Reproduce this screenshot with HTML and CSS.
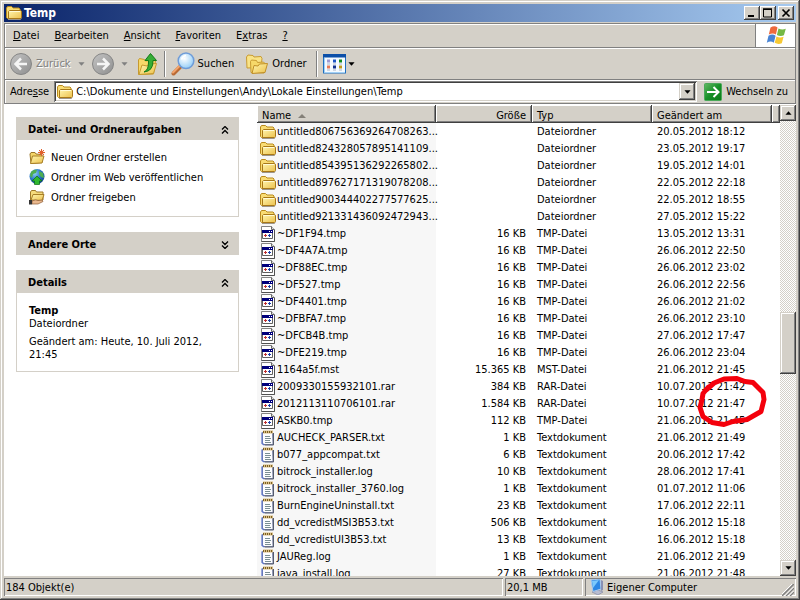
FILE: index.html
```html
<!DOCTYPE html>
<html lang="de">
  <head>
    <meta charset="UTF-8" />
    <meta name="viewport" content="width=device-width, initial-scale=1.0" />
    <title>Temp</title>
    <link rel="stylesheet" href="styles.css">
  </head>
  <body>
    <!-- Shared icons -->
    <svg class="sprite" aria-hidden="true">
      <defs>
        <linearGradient id="gold" x1="0" y1="0" x2="1" y2="1">
          <stop offset="0" stop-color="#fff6ae" />
          <stop offset="1" stop-color="#ecc04c" />
        </linearGradient>
        <linearGradient id="grey" x1="0" y1="0" x2="1" y2="1">
          <stop offset="0" stop-color="#c4c4c4" />
          <stop offset="1" stop-color="#8e8e8e" />
        </linearGradient>
        <linearGradient id="green" x1="0" y1="0" x2="1" y2="1">
          <stop offset="0" stop-color="#63b963" />
          <stop offset="0.5" stop-color="#189028" />
          <stop offset="1" stop-color="#0b7a18" />
        </linearGradient>
        <radialGradient id="lens" cx="0.4" cy="0.35" r="0.7">
          <stop offset="0" stop-color="#ffffff" />
          <stop offset="1" stop-color="#8ecbf7" />
        </radialGradient>
        <radialGradient id="earth" cx="0.35" cy="0.3" r="0.8">
          <stop offset="0" stop-color="#8fd0f5" />
          <stop offset="0.5" stop-color="#2a78c8" />
          <stop offset="1" stop-color="#0e3f86" />
        </radialGradient>
      </defs>
      <symbol id="folder" viewBox="0 0 16 16">
        <path d="M2 14.500h12.500l1-1" fill="none" stroke="#9c958a" />
        <path d="M.5 12.500v-9.500l1-1.500h4l1.500 1.500h6l1 1v8.500l-1 1h-11.500z" fill="#f9dc74" stroke="#b98a1c" />
        <path d="M2.500 13.500v-7l1-1h11l1 .8v6.200l-1 1z" fill="url(#gold)" stroke="#a87818" />
        <path d="M3.500 6.500h10.500" stroke="#fffbd8" />
      </symbol>
      <symbol id="sysfile" viewBox="0 0 16 16">
        <path d="M1.500.5h10l3 3v12h-13z" fill="#fff" stroke="#848484" />
        <path d="M14.500 4v11.500h-13" fill="none" stroke="#505050" />
        <path d="M11.500.5v3h3" fill="#ddd" stroke="#666" />
        <path d="M2.500 4.500h10v8h-10z" fill="#fff" stroke="#606060" />
        <path d="M2 4h11v3h-11z" fill="#00007c" />
        <path d="M9 5.500h1M11 5.500h1" stroke="#fff" />
        <path d="M4 9.500h3M5.500 8v3" stroke="#c03030" />
        <path d="M8 9.500h3M9.500 8v3" stroke="#1a3fa8" />
      </symbol>
      <symbol id="textfile" viewBox="0 0 16 16">
        <path d="M2.500 2.500h10l.5 12h-9l-1.500-1z" fill="#fdfdff" stroke="#7d86a8" />
        <path d="M2 2.500v11l2 1.500" fill="none" stroke="#5870c8" stroke-width="1.200" />
        <path d="M13.500 3v12h-9" fill="none" stroke="#555b6c" />
        <path d="M3 2h10" stroke="#d8bd84" stroke-width="3" />
        <path d="M3 2h10" stroke="#7c6023" stroke-width="2" stroke-dasharray="1 1" />
        <path d="M5 6.500h5M5 8.500h6M5 10.500h5M5 12.500h6" stroke="#7a8f94" />
      </symbol>
      <symbol id="chevrons" viewBox="0 0 8 8">
        <path d="M1 3.500l3-3 3 3M1 7.500l3-3 3 3" fill="none" stroke="#000" stroke-width="1.300" />
      </symbol>
      <symbol id="down" viewBox="0 0 8 4">
        <path d="M.5 0h7l-3.500 4z" fill="currentColor" />
      </symbol>
    </svg>

    <div class="window">
      <header class="titlebar">
        <svg class="icon"><use href="#folder" /></svg>
        <h1>Temp</h1>
        <button class="caption-button" aria-label="Minimieren">
          <svg viewBox="0 0 16 14"><path d="M4 10h6" stroke="#000" stroke-width="2" /></svg>
        </button>
        <button class="caption-button" aria-label="Maximieren">
          <svg viewBox="0 0 16 14"><path d="M3.500 3v8h8v-8M3 3h9" fill="none" stroke="#000" /><path d="M3 2.500h9v1.500h-9z" /></svg>
        </button>
        <button class="caption-button close" aria-label="Schließen">
          <svg viewBox="0 0 16 14"><path d="M4.500 3.500l7 7M11.500 3.500l-7 7" stroke="#000" stroke-width="1.700" /></svg>
        </button>
      </header>

      <div class="bars">
        <nav class="menubar">
          <button><u>D</u>atei</button>
          <button><u>B</u>earbeiten</button>
          <button><u>A</u>nsicht</button>
          <button><u>F</u>avoriten</button>
          <button>E<u>x</u>tras</button>
          <button><u>?</u></button>
          <div class="brand">
            <svg viewBox="0 0 20 19">
              <path d="M4.500 1.500q4-2.500 7 0l-1.600 7q-3-2.200-7.100 0z" fill="#ee6a3c" />
              <path d="M12.500 2.500q3.600 2 7.300.3l-1.900 6.500q-3.500 1.700-7-.3z" fill="#75b844" />
              <path d="M2.500 9.700q4-2.200 7.100 0l-1.800 7q-3-2.300-7 0z" fill="#4783d4" />
              <path d="M10.500 10.400q3.500 2 7.100.3l-1.800 6.500q-3.700 1.600-7.100-.4z" fill="#f7c934" />
            </svg>
          </div>
        </nav>

        <div class="toolbar">
          <button class="tool nav-tool" disabled>
            <svg class="round" viewBox="0 0 22 22">
              <circle cx="11" cy="11" r="10.500" fill="url(#grey)" stroke="#858585" />
              <path d="M17 11h-11M11 5.500l-5.500 5.500 5.500 5.500" fill="none" stroke="#f5f5f5" stroke-width="2.500" />
            </svg>
            <span>Zurück</span>
            <svg class="arrow"><use href="#down" /></svg>
          </button>
          <button class="tool nav-tool forward" disabled aria-label="Vorwärts">
            <svg class="round" viewBox="0 0 22 22">
              <circle cx="11" cy="11" r="10.500" fill="url(#grey)" stroke="#858585" />
              <path d="M5 11h11M11 5.500l5.500 5.500-5.500 5.500" fill="none" stroke="#f5f5f5" stroke-width="2.500" />
            </svg>
            <svg class="arrow"><use href="#down" /></svg>
          </button>
          <button class="tool up" aria-label="Aufwärts">
            <svg class="big" viewBox="0 0 22 22">
              <path d="M1.500 7l1-1.500 5 1 1 1.500 8-1 2 1-2 13-15 .5z" fill="#f6d869" stroke="#c69a30" />
              <path d="M2 21.500l3-9.500 5 1 1.500-2 8-.5-3 10z" fill="url(#gold)" stroke="#c69a30" />
              <path d="M7 19q5-2 4.500-11.500h-3.500l5.500-7 6 7h-3.500q.5 10.500-9 11.500z" fill="#36ad36" stroke="#127a18" />
            </svg>
          </button>
          <span class="separator"></span>
          <button class="tool search">
            <svg class="big" viewBox="0 0 24 24">
              <path d="M2.500 21.500l8-8" stroke="#b96a35" stroke-width="4" stroke-linecap="round" />
              <path d="M2 20.500l7.500-7.500" stroke="#f3a36b" stroke-width="2" stroke-linecap="round" />
              <circle cx="15" cy="8.800" r="7.800" fill="url(#lens)" stroke="#6f9cd8" stroke-width="1.500" />
              <path d="M10.500 7.500q1-3.500 4.500-4" fill="none" stroke="#fff" stroke-width="1.500" />
            </svg>
            Suchen
          </button>
          <button class="tool">
            <svg class="big" viewBox="0 0 22 22">
              <path d="M1 15l-.5-11 1.500-2 5 .5 1 1.500 7-.5 1 2-1 9z" fill="#f9e386" stroke="#c99b32" />
              <path d="M5 19.500l-.5-11 1-1.500 5 .5 1 2 6-.5 1.500 1.500-1 9.500z" fill="#f6d869" stroke="#c99b32" />
              <path d="M6 20.500l2-8 4 .5 1.500-2 8-.5-2.500 9z" fill="url(#gold)" stroke="#c08f28" />
            </svg>
            <span class="wide-label">Ordner</span>
          </button>
          <span class="separator"></span>
          <button class="tool views" aria-label="Ansichten">
            <svg class="grid" viewBox="0 0 24 20">
              <rect x=".5" y=".5" width="22" height="18.500" fill="#f4faff" stroke="#1e6fc0" />
              <rect width="23" height="3.500" fill="#0c4fa8" />
              <path d="M1.500 4v14.500h20.500" fill="none" stroke="#9fd0f7" />
              <path d="M4 5.500h3v3h-3z" fill="#a09ad0" />
              <path d="M10 5.500h3v3h-3z" fill="#1c55c4" />
              <path d="M16 5.500h3v3h-3z" fill="#108a20" />
              <path d="M4 11.500h3v3h-3z" fill="#e87a58" />
              <path d="M10 11.500h3v3h-3z" fill="#10308e" />
              <path d="M16 11.500h3v3h-3z" fill="#c09a20" />
              <path d="M4 10h3M10 10h3M16 10h3M4 16h3M10 16h3M16 16h3" stroke="#a8b4c8" />
            </svg>
            <svg class="arrow"><use href="#down" /></svg>
          </button>
        </div>

        <form class="addressbar" onsubmit="return false">
          <label for="address">Adre<u>s</u>se</label>
          <div class="combo">
            <svg class="icon"><use href="#folder" /></svg>
            <input type="text" id="address" value="C:\Dokumente und Einstellungen\Andy\Lokale Einstellungen\Temp" />
            <button type="button" class="raised" aria-label="Verlauf"><svg class="arrow"><use href="#down" /></svg></button>
          </div>
          <button class="go">
            <svg viewBox="0 0 18 18">
              <rect x=".5" y=".5" width="17" height="17" rx="1" fill="url(#green)" stroke="#4aa858" />
              <path d="M3 9h11M9.500 4l5 5-5 5" fill="none" stroke="#fff" stroke-width="2" />
            </svg>
            Wechseln zu
          </button>
        </form>
      </div>

      <main class="content">
        <aside class="sidebar">
          <section class="panel">
            <h2><button>Datei- und Ordneraufgaben<svg><use href="#chevrons" /></svg></button></h2>
            <ul class="tasks">
              <li>
                <svg class="icon" viewBox="0 0 16 16">
                  <path d="M1 5l1-1.500h4l1 1.500 6 .5v8l-11 1z" fill="#f4d568" stroke="#9c7628" />
                  <path d="M1.500 14.500l2-7.500h11.500l-2 7z" fill="url(#gold)" stroke="#a87f26" />
                  <circle cx="12.500" cy="3.500" r="2" fill="#e0602c" />
                  <path d="M12.500 0v7M9 3.500h7M10 1l5 5M15 1l-5 5" stroke="#e0602c" />
                </svg>
                <a href="#">Neuen Ordner erstellen</a>
              </li>
              <li>
                <svg class="icon" viewBox="0 0 16 16">
                  <circle cx="8" cy="7.500" r="7.500" fill="url(#earth)" />
                  <path d="M2 3q3-3 6-2l-1 3-3 1-1 4-2-2zM10 2l4 2 1 5-3-1-2-3z" fill="#4fae50" />
                  <path d="M8 7l5 5h-2.500v3.500h-5v-3.500h-2.500z" fill="#2fb82f" stroke="#0c6a14" stroke-width=".7" />
                </svg>
                <a href="#">Ordner im Web veröffentlichen</a>
              </li>
              <li>
                <svg class="icon" viewBox="0 0 16 16">
                  <path d="M1.500 11v-8l1-1.500h4l1 1.500h6.500v8z" fill="#f6dc7c" stroke="#a07a28" />
                  <path d="M2 11l2-5.500h11l-2 6z" fill="url(#gold)" stroke="#a87f26" />
                  <path d="M3 12q4-2 6-.5l4-.5 1 1.500-5 2.500h-6z" fill="#e9b88e" stroke="#8c5a34" stroke-width=".7" />
                  <path d="M0 11h3v4.500h-3z" fill="#343434" />
                </svg>
                <a href="#">Ordner freigeben</a>
              </li>
            </ul>
          </section>

          <section class="panel">
            <h2><button>Andere Orte<svg class="collapsed"><use href="#chevrons" /></svg></button></h2>
          </section>

          <section class="panel">
            <h2><button>Details<svg><use href="#chevrons" /></svg></button></h2>
            <div class="details">
              <strong>Temp</strong>
              <p>Dateiordner</p>
              <p class="modified">Geändert am: Heute, 10. Juli 2012, 21:45</p>
            </div>
          </section>
        </aside>

        <div class="list">
          <table class="files">
            <colgroup>
              <col class="col-name" />
              <col class="col-size" />
              <col class="col-type" />
              <col class="col-date" />
              <col />
            </colgroup>
            <thead>
              <tr>
                <th>Name <svg class="sort" viewBox="0 0 8 4"><path d="M0 4l4-4 4 4z" fill="#848078" /></svg></th>
                <th class="size">Größe</th>
                <th>Typ</th>
                <th>Geändert am</th>
                <th></th>
              </tr>
            </thead>
            <tbody>
              <tr><td><svg class="icon"><use href="#folder" /></svg>untitled806756369264708263...</td><td></td><td>Dateiordner</td><td>20.05.2012 18:12</td><td></td></tr>
              <tr><td><svg class="icon"><use href="#folder" /></svg>untitled824328057895141109...</td><td></td><td>Dateiordner</td><td>23.05.2012 19:17</td><td></td></tr>
              <tr><td><svg class="icon"><use href="#folder" /></svg>untitled854395136292265802...</td><td></td><td>Dateiordner</td><td>19.05.2012 14:01</td><td></td></tr>
              <tr><td><svg class="icon"><use href="#folder" /></svg>untitled897627171319078208...</td><td></td><td>Dateiordner</td><td>22.05.2012 22:18</td><td></td></tr>
              <tr><td><svg class="icon"><use href="#folder" /></svg>untitled900344402277577625...</td><td></td><td>Dateiordner</td><td>22.05.2012 18:55</td><td></td></tr>
              <tr><td><svg class="icon"><use href="#folder" /></svg>untitled921331436092472943...</td><td></td><td>Dateiordner</td><td>27.05.2012 15:22</td><td></td></tr>
              <tr><td><svg class="icon"><use href="#sysfile" /></svg>~DF1F94.tmp</td><td>16 KB</td><td>TMP-Datei</td><td>13.05.2012 13:31</td><td></td></tr>
              <tr><td><svg class="icon"><use href="#sysfile" /></svg>~DF4A7A.tmp</td><td>16 KB</td><td>TMP-Datei</td><td>26.06.2012 22:50</td><td></td></tr>
              <tr><td><svg class="icon"><use href="#sysfile" /></svg>~DF88EC.tmp</td><td>16 KB</td><td>TMP-Datei</td><td>26.06.2012 23:02</td><td></td></tr>
              <tr><td><svg class="icon"><use href="#sysfile" /></svg>~DF527.tmp</td><td>16 KB</td><td>TMP-Datei</td><td>26.06.2012 22:56</td><td></td></tr>
              <tr><td><svg class="icon"><use href="#sysfile" /></svg>~DF4401.tmp</td><td>16 KB</td><td>TMP-Datei</td><td>26.06.2012 21:02</td><td></td></tr>
              <tr><td><svg class="icon"><use href="#sysfile" /></svg>~DFBFA7.tmp</td><td>16 KB</td><td>TMP-Datei</td><td>26.06.2012 23:10</td><td></td></tr>
              <tr><td><svg class="icon"><use href="#sysfile" /></svg>~DFCB4B.tmp</td><td>16 KB</td><td>TMP-Datei</td><td>27.06.2012 17:47</td><td></td></tr>
              <tr><td><svg class="icon"><use href="#sysfile" /></svg>~DFE219.tmp</td><td>16 KB</td><td>TMP-Datei</td><td>26.06.2012 23:04</td><td></td></tr>
              <tr><td><svg class="icon"><use href="#sysfile" /></svg>1164a5f.mst</td><td>15.365 KB</td><td>MST-Datei</td><td>21.06.2012 21:45</td><td></td></tr>
              <tr><td><svg class="icon"><use href="#sysfile" /></svg>2009330155932101.rar</td><td>384 KB</td><td>RAR-Datei</td><td>10.07.2012 21:42</td><td></td></tr>
              <tr><td><svg class="icon"><use href="#sysfile" /></svg>2012113110706101.rar</td><td>1.584 KB</td><td>RAR-Datei</td><td>10.07.2012 21:47</td><td></td></tr>
              <tr><td><svg class="icon"><use href="#sysfile" /></svg>ASKB0.tmp</td><td>112 KB</td><td>TMP-Datei</td><td>21.06.2012 21:45</td><td></td></tr>
              <tr><td><svg class="icon"><use href="#textfile" /></svg>AUCHECK_PARSER.txt</td><td>1 KB</td><td>Textdokument</td><td>21.06.2012 21:49</td><td></td></tr>
              <tr><td><svg class="icon"><use href="#textfile" /></svg>b077_appcompat.txt</td><td>6 KB</td><td>Textdokument</td><td>20.06.2012 17:42</td><td></td></tr>
              <tr><td><svg class="icon"><use href="#textfile" /></svg>bitrock_installer.log</td><td>10 KB</td><td>Textdokument</td><td>28.06.2012 17:41</td><td></td></tr>
              <tr><td><svg class="icon"><use href="#textfile" /></svg>bitrock_installer_3760.log</td><td>1 KB</td><td>Textdokument</td><td>01.07.2012 11:06</td><td></td></tr>
              <tr><td><svg class="icon"><use href="#textfile" /></svg>BurnEngineUninstall.txt</td><td>23 KB</td><td>Textdokument</td><td>17.06.2012 22:11</td><td></td></tr>
              <tr><td><svg class="icon"><use href="#textfile" /></svg>dd_vcredistMSI3B53.txt</td><td>506 KB</td><td>Textdokument</td><td>16.06.2012 15:18</td><td></td></tr>
              <tr><td><svg class="icon"><use href="#textfile" /></svg>dd_vcredistUI3B53.txt</td><td>13 KB</td><td>Textdokument</td><td>16.06.2012 15:18</td><td></td></tr>
              <tr><td><svg class="icon"><use href="#textfile" /></svg>JAUReg.log</td><td>1 KB</td><td>Textdokument</td><td>21.06.2012 21:49</td><td></td></tr>
              <tr><td><svg class="icon"><use href="#textfile" /></svg>java_install.log</td><td>27 KB</td><td>Textdokument</td><td>21.06.2012 21:48</td><td></td></tr>
            </tbody>
          </table>
          <!-- Hand-drawn marker round the archive's time -->
          <svg class="marker" viewBox="0 0 70 54">
            <path d="M9 15l8-7 10-4 13-.5 8 3 8 1 7 7 3 3 1 7-3 12-14 8-14 2-9 3-12-2-9-6-3-9 2-8 1-6 5-6" fill="none" stroke="#f4000c" stroke-width="5" stroke-linejoin="round" stroke-linecap="round" />
          </svg>
        </div>

        <div class="scrollbar">
          <button class="raised" aria-label="Nach oben"><svg class="arrow flipped"><use href="#down" /></svg></button>
          <div class="track">
            <div class="thumb raised"></div>
          </div>
          <button class="raised" aria-label="Nach unten"><svg class="arrow"><use href="#down" /></svg></button>
        </div>
      </main>

      <footer class="statusbar">
        <span class="cell objects">184 Objekt(e)</span>
        <span class="cell total">20,1 MB</span>
        <span class="cell zone">
          <svg class="icon" viewBox="0 0 16 16">
            <path d="M3 13l6-2 5 2-5 3z" fill="#b8bcd0" stroke="#7a80a0" stroke-width=".6" />
            <path d="M2 1l9-1 1 10-8 2.500z" fill="#2c86e4" stroke="#a8c8ee" />
            <path d="M3 2l7-1-6 8z" fill="#7cc8fc" />
            <path d="M12 1l2 1v9l-2 1z" fill="#8890b4" />
          </svg>
          Eigener Computer
          <svg class="grip" viewBox="0 0 12 12">
            <path d="M0 12l12-12M4 12l8-8M8 12l4-4" stroke="#808080" stroke-width="1.500" />
            <path d="M-1 11l12-12M3 11.500l8.500-8.500M7 11.500l4.500-4.500" stroke="#fff" />
          </svg>
        </span>
      </footer>
    </div>
  </body>
</html>
```
FILE: styles.css
```css
* {
  box-sizing: border-box;
}
body {
  margin: 0;
  font-family: "DejaVu Sans Condensed", "DejaVu Sans", sans-serif;
  font-size: 11px;
  line-height: 13px;
  color: #000;
}
button,
input {
  font: inherit;
  color: inherit;
  margin: 0;
  padding: 0;
  border: 0;
  background: none;
}
h1,
h2,
p,
ul {
  margin: 0;
  padding: 0;
  font-size: 11px;
}
svg {
  display: block;
  flex: none;
}
.sprite {
  position: absolute;
  width: 0;
  height: 0;
}
.icon {
  width: 16px;
  height: 16px;
}
.arrow {
  width: 7px;
  height: 4px;
}
.flipped {
  transform: rotate(180deg);
}
.raised {
  display: flex;
  align-items: center;
  justify-content: center;
  background: #d4d0c8;
  box-shadow: inset -1px -1px #404040, inset 1px 1px #d4d0c8,
    inset -2px -2px #808080, inset 2px 2px #fff;
}

.window {
  display: flex;
  flex-direction: column;
  height: 100vh;
  padding: 4px;
  overflow: hidden;
  background: #d4d0c8;
  box-shadow: inset -1px -1px #404040, inset 1px 1px #d4d0c8,
    inset -2px -2px #808080, inset 2px 2px #fff;
}

/* Title bar */
.titlebar {
  display: flex;
  align-items: center;
  height: 18px;
  padding: 0 2px;
  background: linear-gradient(90deg, #0a246a, #a6caf0);
}
.titlebar h1 {
  flex: 1;
  margin-left: 2px;
  font-size: 12px;
  color: #fff;
}
.caption-button {
  width: 16px;
  height: 14px;
  background: #d4d0c8;
  box-shadow: inset -1px -1px #404040, inset 1px 1px #fff,
    inset -2px -2px #808080;
}
.close {
  margin-left: 2px;
}

/* Menu, tool and address bars */
.bars {
  margin-top: 1px;
  border: 1px solid #808080;
  border-bottom: 0;
}
.menubar,
.toolbar,
.addressbar {
  display: flex;
  align-items: center;
  border-bottom: 1px solid #808080;
  box-shadow: inset 1px 1px #fff;
}
.menubar {
  gap: 15px;
  height: 24px;
  padding-left: 8px;
}
.brand {
  display: flex;
  align-items: center;
  justify-content: center;
  align-self: stretch;
  width: 40px;
  margin-left: auto;
  border-left: 1px solid #808080;
  background: #fff;
}
.brand svg {
  width: 20px;
  height: 19px;
}
.toolbar {
  height: 32px;
  padding-left: 5px;
}
.tool {
  display: flex;
  align-items: center;
  gap: 4px;
}
.nav-tool {
  color: #808080;
  text-shadow: 1px 1px #fff;
}
.nav-tool span {
  margin-right: 3px;
}
.round {
  width: 22px;
  height: 22px;
}
.forward {
  gap: 7px;
  margin-left: 7px;
}
.up {
  margin-left: 9px;
}
.big {
  width: 22px;
  height: 22px;
}
.separator {
  width: 2px;
  height: 26px;
  margin: 0 5px;
  border-left: 1px solid #808080;
  border-right: 1px solid #fff;
}
.search {
  gap: 3px;
  margin-right: 12px;
}
.search .big {
  width: 24px;
  height: 24px;
}
.wide-label {
  margin-right: 4px;
}
.views {
  gap: 1px;
}
.grid {
  width: 24px;
  height: 20px;
}
.addressbar {
  gap: 5px;
  height: 24px;
  padding: 0 7px 0 5px;
}
.combo {
  display: flex;
  flex: 1;
  align-items: center;
  height: 21px;
  padding: 2px 2px 2px 3px;
  background: #fff;
  box-shadow: inset 1px 1px #808080, inset -1px -1px #fff,
    inset 2px 2px #404040, inset -2px -2px #d4d0c8;
}
.combo input {
  flex: 1;
  min-width: 0;
  margin-left: 3px;
  outline: 0;
}
.combo .raised {
  width: 16px;
  height: 17px;
}
.go {
  display: flex;
  align-items: center;
  gap: 4px;
  margin-left: 2px;
}
.go svg {
  width: 18px;
  height: 18px;
}

/* Task pane */
.content {
  display: flex;
  flex: 1;
  min-height: 0;
  padding-top: 1px;
  background: #fff;
}
.sidebar {
  display: flex;
  flex: none;
  flex-direction: column;
  gap: 15px;
  width: 253px;
  padding: 12px 18px 0 12px;
}
.panel h2 button {
  display: flex;
  align-items: center;
  justify-content: space-between;
  width: 100%;
  height: 23px;
  padding: 2px 10px 0 12px;
  font-weight: bold;
  background: #d4d0c8;
}
.panel h2 svg {
  width: 8px;
  height: 8px;
}
.panel .collapsed {
  transform: rotate(180deg);
}
.tasks,
.details {
  border: 1px solid #d4d0c8;
  border-top: 0;
}
.tasks {
  padding: 7px 12px 9px;
  list-style: none;
}
.tasks li {
  display: flex;
  align-items: center;
  gap: 6px;
  height: 20px;
}
.tasks a {
  color: #000;
  text-decoration: none;
}
.details {
  padding: 11px 12px 10px;
}
.modified {
  margin-top: 5px;
}

/* File list */
.list {
  position: relative;
  flex: 1;
  min-width: 0;
  overflow: hidden;
}
.files {
  width: 100%;
  table-layout: fixed;
  border-collapse: collapse;
}
.col-name {
  width: 179px;
}
.col-size {
  width: 96px;
}
.col-type,
.col-date {
  width: 120px;
}
.files th {
  height: 18px;
  padding: 2px 5px 0;
  font-weight: normal;
  text-align: left;
  background: #d4d0c8;
  box-shadow: inset -1px -1px #404040, inset 1px 1px #fff,
    inset -2px -2px #808080;
}
.files .size {
  padding-right: 6px;
  text-align: right;
}
.sort {
  display: inline-block;
  width: 8px;
  height: 4px;
  margin-left: 4px;
  vertical-align: middle;
}
.files td {
  height: 17px;
  padding: 0 5px;
  line-height: 16px;
  white-space: nowrap;
}
.files td:first-child {
  padding: 0 0 0 3px;
  background: #f7f7f7;
}
.files td:nth-child(2) {
  padding-right: 6px;
  text-align: right;
}
.files .icon {
  display: inline-block;
  margin-right: 1px;
  vertical-align: top;
}
.marker {
  position: absolute;
  top: 270px;
  right: 13px;
  width: 70px;
  height: 54px;
}

/* Scroll bar */
.scrollbar {
  display: flex;
  flex: none;
  flex-direction: column;
  width: 16px;
}
.scrollbar button {
  height: 16px;
}
.track {
  flex: 1;
  padding-top: 191px;
  background: repeating-conic-gradient(#d4d0c8 0 25%, #fff 0 50%) 0 0 / 2px 2px;
}
.thumb {
  height: 62px;
}

/* Status bar */
.statusbar {
  display: flex;
  gap: 2px;
  height: 20px;
  padding-top: 2px;
}
.cell {
  display: flex;
  align-items: center;
  padding: 0 2px;
  box-shadow: inset 1px 1px #808080, inset -1px -1px #fff;
}
.objects {
  flex: 1;
}
.total {
  width: 78px;
}
.zone {
  gap: 2px;
  width: 211px;
  padding-left: 4px;
}
.grip {
  align-self: flex-end;
  width: 12px;
  height: 12px;
  margin-left: auto;
}
```
